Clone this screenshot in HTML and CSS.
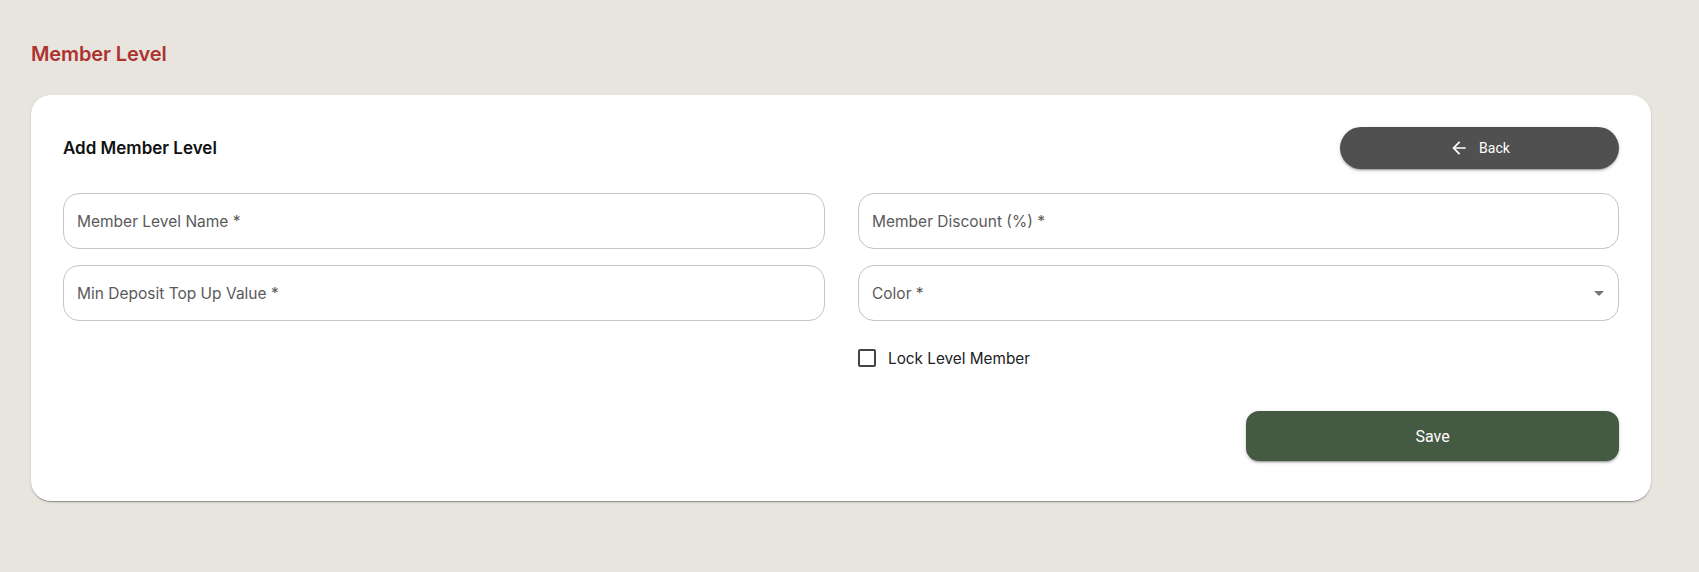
FILE: index.html
```html
<!DOCTYPE html>
<html lang="en">
<head>
<meta charset="utf-8">
<title>Member Level</title>
<link rel="stylesheet" href="styles.css">
</head>
<body>
<div class="page">
  <h1 class="page-title">Member Level</h1>
  <div class="card">
    <div class="card-header">
      <h2 class="card-title">Add Member Level</h2>
      <button class="btn-back" type="button">
        <svg class="back-icon" viewBox="0 0 24 24" width="20" height="20"><path fill="currentColor" d="M20 11H7.83l5.59-5.59L12 4l-8 8 8 8 1.41-1.41L7.83 13H20v-2z"/></svg>
        <span>Back</span>
      </button>
    </div>
    <div class="form-grid">
      <div class="field"><span class="label">Member Level Name *</span></div>
      <div class="field"><span class="label">Member Discount (%) *</span></div>
      <div class="field"><span class="label">Min Deposit Top Up Value *</span></div>
      <div class="field select"><span class="label">Color *</span>
        <svg class="drop-icon" viewBox="0 0 10 5" width="10" height="5"><path fill="currentColor" d="M0 0l5 5 5-5z"/></svg>
      </div>
      <label class="check-row">
        <span class="checkbox"></span>
        <span class="check-label">Lock Level Member</span>
      </label>
    </div>
    <div class="actions">
      <button class="btn-save" type="button">Save</button>
    </div>
  </div>
</div>
</body>
</html>
```
FILE: styles.css
```css
* { box-sizing: border-box; }
html, body { margin: 0; padding: 0; }
body {
  background: #e8e5df;
  font-family: "Inter", "Noto Sans", sans-serif;
  width: 1699px;
  height: 572px;
  overflow: hidden;
}
.page {
  padding: 42px 48px 0 31px;
}
.page-title {
  margin: 0 0 29px 0;
  font-size: 20px;
  line-height: 24px;
  font-weight: 600;
  color: #ad3330;
  letter-spacing: -0.1px;
}
.card {
  background: #fff;
  border-radius: 20px;
  padding: 32px 32px 40px 32px;
  box-shadow: 0 2px 1px -1px rgba(0,0,0,0.2), 0 1px 1px 0 rgba(0,0,0,0.14), 0 1px 3px 0 rgba(0,0,0,0.12);
}
.card-header {
  display: flex;
  justify-content: space-between;
  align-items: center;
  margin-bottom: 24px;
}
.card-title {
  margin: 0;
  font-size: 17px;
  font-weight: 600;
  color: #111;
}
.btn-back {
  width: 279px;
  height: 42px;
  border: none;
  border-radius: 21px;
  background: #505050;
  color: #fff;
  display: flex;
  align-items: center;
  justify-content: center;
  gap: 10px;
  font-family: "Roboto", "Liberation Sans", sans-serif;
  font-size: 14px;
  font-weight: 400;
  box-shadow: 0 3px 1px -2px rgba(0,0,0,0.2), 0 2px 2px 0 rgba(0,0,0,0.14), 0 1px 5px 0 rgba(0,0,0,0.12);
  padding: 0;
}
.back-icon { display: block; }
.form-grid {
  display: grid;
  grid-template-columns: 762px 761px;
  column-gap: 33px;
  row-gap: 16px;
}
.field {
  height: 56px;
  border: 1px solid #c4c4c4;
  border-radius: 16px;
  display: flex;
  align-items: center;
  padding: 0 13px;
}
.label {
  font-size: 15.5px;
  color: #5a5a5a;
}
.select { justify-content: space-between; }
.drop-icon { color: #757575; margin-right: 1px; }
.check-row {
  grid-column: 2;
  display: flex;
  align-items: center;
  height: 42px;
  gap: 12px;
}
.checkbox {
  width: 18px;
  height: 18px;
  border: 2px solid #444;
  border-radius: 2px;
}
.check-label {
  font-size: 15.3px;
  color: #222;
}
.actions {
  display: flex;
  justify-content: flex-end;
  margin-top: 32px;
}
.btn-save {
  width: 373px;
  height: 50px;
  border: none;
  border-radius: 13px;
  background: #455a43;
  color: #fff;
  font-family: "Roboto", "Liberation Sans", sans-serif;
  font-size: 16px;
  box-shadow: 0 3px 1px -2px rgba(0,0,0,0.2), 0 2px 2px 0 rgba(0,0,0,0.14), 0 1px 5px 0 rgba(0,0,0,0.12);
}
```
